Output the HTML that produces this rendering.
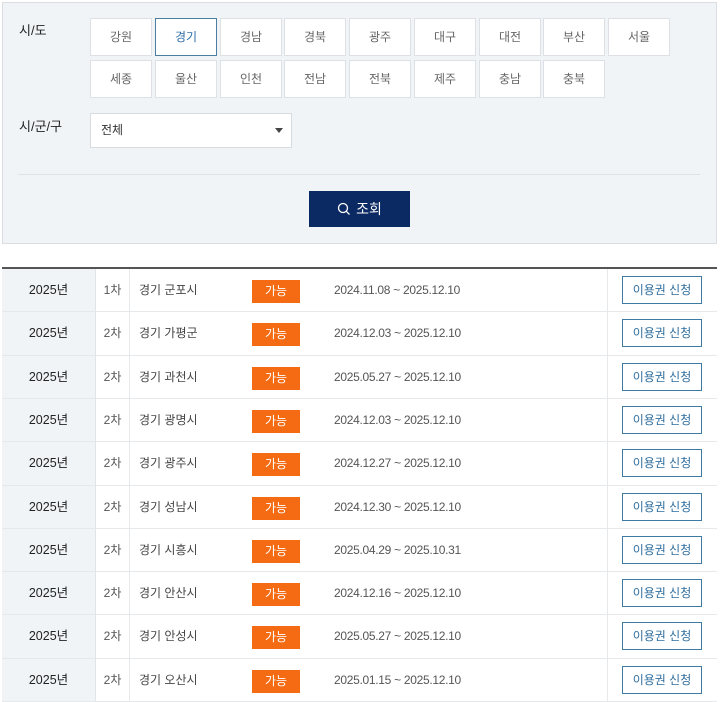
<!DOCTYPE html>
<html><head><meta charset="utf-8"><style>
*{margin:0;padding:0;box-sizing:border-box}
body{width:720px;height:701px;background:#fff;font-family:"Liberation Sans","Noto Sans CJK KR",sans-serif;position:relative;overflow:hidden;color:#333}
.box{position:absolute;left:2px;top:2px;width:715px;height:242px;background:#f1f4f7;border:1px solid #dadee3}
.a{position:absolute}
.lbl{font-size:13px;color:#222}
.btn{position:absolute;width:62px;height:38px;background:#fff;border:1px solid #dde1e5;font-size:12px;color:#666;text-align:center;line-height:36px}
.btn.on{border-color:#4a7fa3;color:#2e6ea6}
.sel{left:90px;top:113px;width:202px;height:35px;background:#fff;border:1px solid #d7dce1;font-size:12px;color:#333;line-height:33px;padding-left:10px}
.sel:after{content:"";position:absolute;right:8px;top:14px;border:4px solid transparent;border-top:5px solid #444}
.div{left:18px;top:174px;width:682px;height:1px;background:#dde2e7}
.search{left:309px;top:191px;width:101px;height:36px;background:#0b2a63;color:#fff;font-size:14px;text-align:center;line-height:36px}
.topline{left:2px;top:267px;width:715px;height:2px;background:#555}
.row{position:absolute;left:2px;width:715px;height:43.4px;border-bottom:1px solid #e6e9ec;font-size:12px}
.yr{position:absolute;left:0;top:0;width:94px;height:100%;background:#f1f4f7;border-right:1px solid #e1e5e9;font-size:12.5px;color:#222;text-align:center;line-height:43px}
.ch{position:absolute;left:94px;top:0;width:34px;height:100%;border-right:1px solid #e6e9ec;text-align:center;line-height:43px;color:#555}
.nm{position:absolute;left:137px;top:0;line-height:43px;color:#444}
.bd{position:absolute;left:250px;top:11px;width:48px;height:23px;background:#f46b13;color:#fff;text-align:center;line-height:23px;font-size:12px}
.dt{position:absolute;left:332px;top:0;line-height:43px;color:#555;font-size:12px;letter-spacing:-0.3px}
.vs{position:absolute;left:605px;top:0;width:1px;height:100%;background:#e6e9ec}
.ap{position:absolute;left:620px;top:7px;width:80px;height:28px;border:1px solid #3f7aa3;color:#2f6e9e;text-align:center;line-height:26px;font-size:12px;background:#fff}
</style></head><body>
<div class="box"></div>
<div class="a lbl" style="left:19px;top:20px">시/도</div>
<div class="btn" style="left:90px;top:18px">강원</div>
<div class="btn on" style="left:155px;top:18px">경기</div>
<div class="btn" style="left:220px;top:18px">경남</div>
<div class="btn" style="left:284px;top:18px">경북</div>
<div class="btn" style="left:349px;top:18px">광주</div>
<div class="btn" style="left:414px;top:18px">대구</div>
<div class="btn" style="left:479px;top:18px">대전</div>
<div class="btn" style="left:543px;top:18px">부산</div>
<div class="btn" style="left:608px;top:18px">서울</div>
<div class="btn" style="left:90px;top:60px">세종</div>
<div class="btn" style="left:155px;top:60px">울산</div>
<div class="btn" style="left:220px;top:60px">인천</div>
<div class="btn" style="left:284px;top:60px">전남</div>
<div class="btn" style="left:349px;top:60px">전북</div>
<div class="btn" style="left:414px;top:60px">제주</div>
<div class="btn" style="left:479px;top:60px">충남</div>
<div class="btn" style="left:543px;top:60px">충북</div>
<div class="a lbl" style="left:19px;top:116px">시/군/구</div>
<div class="a sel">전체</div>
<div class="a div"></div>
<div class="a search"><svg width="14" height="14" viewBox="0 0 14 14" style="vertical-align:-2px;margin-right:5px"><circle cx="6" cy="6" r="4.5" fill="none" stroke="#fff" stroke-width="1.3"/><path d="M9.3 9.3L12.5 12.5" stroke="#fff" stroke-width="1.3"/></svg>조회</div>
<div class="a topline"></div>
<div class="row" style="top:269px"><div class="yr">2025년</div><div class="ch">1차</div><div class="nm">경기 군포시</div><div class="bd">가능</div><div class="dt">2024.11.08 ~ 2025.12.10</div><div class="vs"></div><div class="ap">이용권 신청</div></div>
<div class="row" style="top:312.3px"><div class="yr">2025년</div><div class="ch">2차</div><div class="nm">경기 가평군</div><div class="bd">가능</div><div class="dt">2024.12.03 ~ 2025.12.10</div><div class="vs"></div><div class="ap">이용권 신청</div></div>
<div class="row" style="top:355.6px"><div class="yr">2025년</div><div class="ch">2차</div><div class="nm">경기 과천시</div><div class="bd">가능</div><div class="dt">2025.05.27 ~ 2025.12.10</div><div class="vs"></div><div class="ap">이용권 신청</div></div>
<div class="row" style="top:398.9px"><div class="yr">2025년</div><div class="ch">2차</div><div class="nm">경기 광명시</div><div class="bd">가능</div><div class="dt">2024.12.03 ~ 2025.12.10</div><div class="vs"></div><div class="ap">이용권 신청</div></div>
<div class="row" style="top:442.2px"><div class="yr">2025년</div><div class="ch">2차</div><div class="nm">경기 광주시</div><div class="bd">가능</div><div class="dt">2024.12.27 ~ 2025.12.10</div><div class="vs"></div><div class="ap">이용권 신청</div></div>
<div class="row" style="top:485.5px"><div class="yr">2025년</div><div class="ch">2차</div><div class="nm">경기 성남시</div><div class="bd">가능</div><div class="dt">2024.12.30 ~ 2025.12.10</div><div class="vs"></div><div class="ap">이용권 신청</div></div>
<div class="row" style="top:528.8px"><div class="yr">2025년</div><div class="ch">2차</div><div class="nm">경기 시흥시</div><div class="bd">가능</div><div class="dt">2025.04.29 ~ 2025.10.31</div><div class="vs"></div><div class="ap">이용권 신청</div></div>
<div class="row" style="top:572.1px"><div class="yr">2025년</div><div class="ch">2차</div><div class="nm">경기 안산시</div><div class="bd">가능</div><div class="dt">2024.12.16 ~ 2025.12.10</div><div class="vs"></div><div class="ap">이용권 신청</div></div>
<div class="row" style="top:615.4px"><div class="yr">2025년</div><div class="ch">2차</div><div class="nm">경기 안성시</div><div class="bd">가능</div><div class="dt">2025.05.27 ~ 2025.12.10</div><div class="vs"></div><div class="ap">이용권 신청</div></div>
<div class="row" style="top:658.7px"><div class="yr">2025년</div><div class="ch">2차</div><div class="nm">경기 오산시</div><div class="bd">가능</div><div class="dt">2025.01.15 ~ 2025.12.10</div><div class="vs"></div><div class="ap">이용권 신청</div></div>
</body></html>
